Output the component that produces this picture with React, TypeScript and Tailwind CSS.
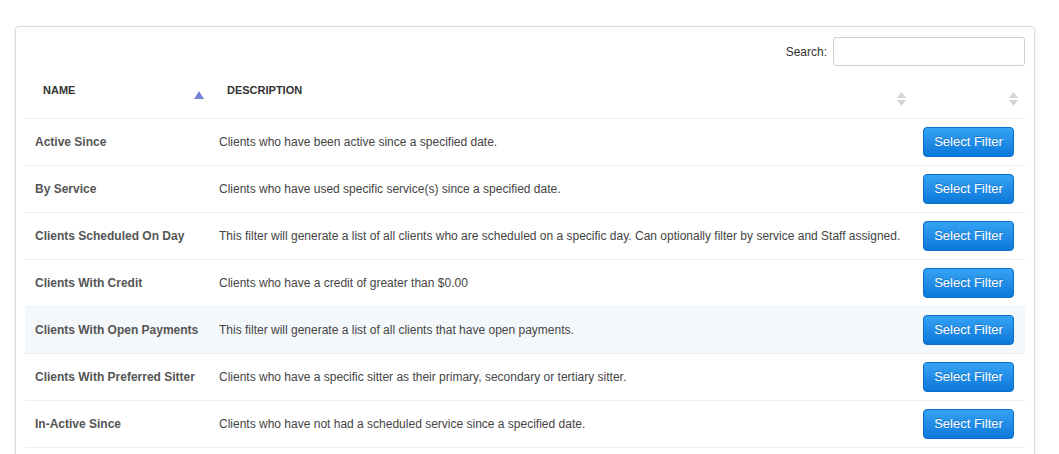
const FILTERS = [
  { name: "Active Since", desc: "Clients who have been active since a specified date." },
  { name: "By Service", desc: "Clients who have used specific service(s) since a specified date." },
  {
    name: "Clients Scheduled On Day",
    desc: "This filter will generate a list of all clients who are scheduled on a specific day. Can optionally filter by service and Staff assigned.",
  },
  { name: "Clients With Credit", desc: "Clients who have a credit of greater than $0.00" },
  { name: "Clients With Open Payments", desc: "This filter will generate a list of all clients that have open payments." },
  { name: "Clients With Preferred Sitter", desc: "Clients who have a specific sitter as their primary, secondary or tertiary sitter." },
  { name: "In-Active Since", desc: "Clients who have not had a scheduled service since a specified date." },
];

function SortBoth() {
  return (
    <svg width="9" height="14" viewBox="0 0 9 14" className="absolute right-[7px] top-[22px]">
      <path d="M4.5 0 L9 6 L0 6 Z" fill="#d3d3d3" />
      <path d="M4.5 14 L9 8 L0 8 Z" fill="#d3d3d3" />
    </svg>
  );
}

function SortAsc() {
  return (
    <svg width="10" height="8" viewBox="0 0 10 8" className="absolute right-[5px] top-[21px]">
      <path d="M5 0 L10 8 L0 8 Z" fill="#7b80d8" />
    </svg>
  );
}

export default function App() {
  return (
    <div className="min-h-screen bg-white pt-[26px] px-[15px] pr-[24px] text-[#333]" style={{ fontFamily: '"Liberation Sans", Arial, sans-serif' }}>
      <div className="h-[440px] rounded-[4px] border border-[#dcdcdc] bg-white px-[9px] pt-[10px] shadow-[0_1px_3px_rgba(0,0,0,0.12)] overflow-hidden">
        <div className="flex items-center justify-end gap-[6px]">
          <label className="text-[12px] text-[#333]">Search:</label>
          <input className="h-[29px] w-[192px] rounded-[3px] border border-[#cfcfcf] bg-white outline-none" />
        </div>
        <table className="mt-[4px] w-[1000px] table-fixed border-collapse">
          <colgroup>
            <col className="w-[184px]" />
            <col className="w-[704px]" />
            <col className="w-[112px]" />
          </colgroup>
          <thead>
            <tr>
              <th className="relative pl-[18px] pt-[13px] pb-[21px] text-left text-[11px] font-bold uppercase leading-[14px] text-[#333]">
                Name
                <SortAsc />
              </th>
              <th className="relative pl-[18px] pt-[13px] pb-[21px] text-left text-[11px] font-bold uppercase leading-[14px] text-[#333]">
                Description
                <SortBoth />
              </th>
              <th className="relative pt-[13px] pb-[21px]">
                <SortBoth />
              </th>
            </tr>
          </thead>
          <tbody>
            {FILTERS.map((f, i) => (
              <tr key={f.name} className={`h-[47px] border-t border-[#e8eef3] ${i === 4 ? "bg-[#f4f8fb]" : ""}`}>
                <td className="pl-[10px] pb-[1px] align-middle text-[12px] font-bold text-[#555] whitespace-nowrap">{f.name}</td>
                <td className="pl-[10px] pb-[1px] align-middle text-[12px] text-[#444] whitespace-nowrap">{f.desc}</td>
                <td className="pl-[10px] align-middle">
                  <button className="h-[30px] w-[91px] rounded-[4px] border border-[#0b6fc9] bg-gradient-to-b from-[#34a3f5] to-[#0a78d9] text-[13px] text-white [text-shadow:0_-1px_0_rgba(0,0,0,0.2)]">
                    Select Filter
                  </button>
                </td>
              </tr>
            ))}
            <tr className="h-[10px] border-t border-[#e8eef3]">
              <td colSpan={3} />
            </tr>
          </tbody>
        </table>
      </div>
    </div>
  );
}
